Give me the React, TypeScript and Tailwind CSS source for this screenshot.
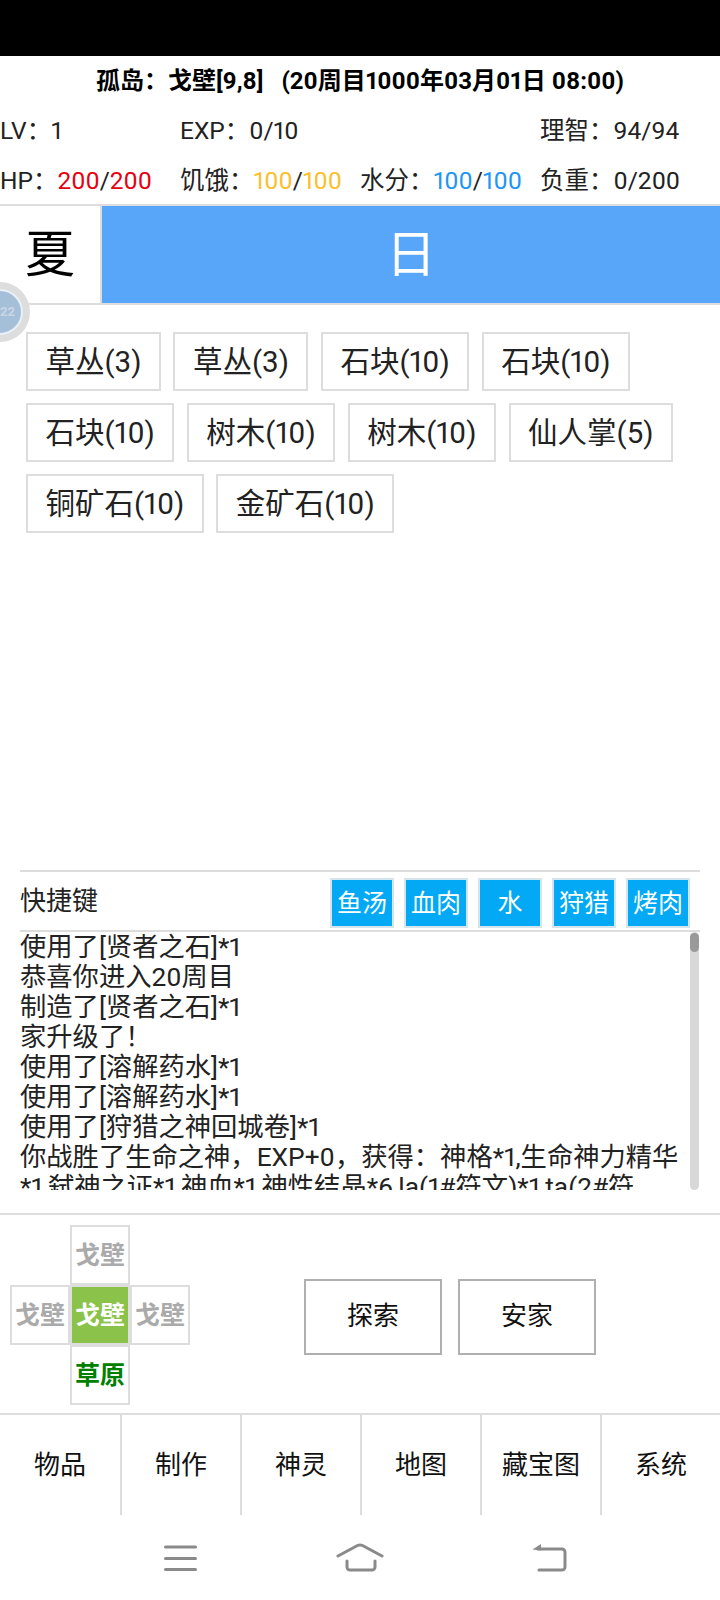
import React from "react";

const FONT = "[font-family:Roboto,'Noto_Sans_CJK_SC',sans-serif] proportional-nums";

const chipRows = [
  ["草丛(3)", "草丛(3)", "石块(10)", "石块(10)"],
  ["石块(10)", "树木(10)", "树木(10)", "仙人掌(5)"],
  ["铜矿石(10)", "金矿石(10)"],
];

const shortcuts = ["鱼汤", "血肉", "水", "狩猎", "烤肉"];
const tabs = ["物品", "制作", "神灵", "地图", "藏宝图", "系统"];

const logLines = [
  "使用了[贤者之石]*1",
  "恭喜你进入20周目",
  "制造了[贤者之石]*1",
  "家升级了！",
  "使用了[溶解药水]*1",
  "使用了[溶解药水]*1",
  "使用了[狩猎之神回城卷]*1",
  "你战胜了生命之神，EXP+0，获得：神格*1,生命神力精华",
  "*1,弑神之证*1,神血*1,神性结晶*6,la(1#符文)*1,ta(2#符",
];

const Stat = ({
  label,
  value,
  max,
  color,
}: {
  label: string;
  value: string;
  max: string;
  color: string;
}) => (
  <div className="whitespace-nowrap">
    {label}：<span className={color}>{value}</span>/
    <span className={color}>{max}</span>
  </div>
);

const MapCell = ({
  label,
  className,
}: {
  label: string;
  className: string;
}) => (
  <div
    className={`flex h-[60px] w-[60px] items-center justify-center border-2 border-[#dddddd] pt-[3px] text-[25px] font-bold ${className}`}
  >
    {label}
  </div>
);

export default function App() {
  return (
    <div className={`flex h-[1600px] w-[720px] flex-col overflow-hidden bg-white text-black ${FONT}`}>
      {/* Status bar */}
      <div className="h-[56px] shrink-0 bg-black" />

      {/* Title */}
      <div className="flex h-[50px] shrink-0 items-center justify-center whitespace-pre text-[24px] font-bold">
        孤岛：戈壁[9,8]{"   "}(20周目1000年03月01日 08:00)
      </div>

      {/* Stats */}
      <div className="grid h-[50px] shrink-0 grid-cols-4 items-center pt-px text-[24.5px] text-[#222222]">
        <div>LV：1</div>
        <div>EXP：0/10</div>
        <div />
        <div>理智：94/94</div>
      </div>
      <div className="grid h-[48px] shrink-0 grid-cols-4 items-center pt-[2px] text-[24.5px] text-[#222222]">
        <Stat label="HP" value="200" max="200" color="text-[#e60012]" />
        <Stat label="饥饿" value="100" max="100" color="text-[#fbc02d]" />
        <Stat label="水分" value="100" max="100" color="text-[#2196f3]" />
        <div>负重：0/200</div>
      </div>

      {/* Season and time of day */}
      <div className="flex h-[101px] shrink-0 border-y-2 border-[#dddddd] text-[50px]">
        <div className="flex w-[102px] items-center justify-center border-r-2 border-[#dddddd] pt-[2px]">
          夏
        </div>
        <div className="flex flex-1 items-center justify-center bg-[#58a6f9] pt-[2px] text-white">
          日
        </div>
      </div>

      {/* Floating ball */}
      <div className="absolute left-[-30px] top-[282px] flex h-[60px] w-[60px] items-center justify-center rounded-full bg-[#dddddd]">
        <div className="flex h-[46px] w-[46px] items-center justify-end rounded-full border-2 border-[#e8f0f8] bg-[#a6bfd9] pr-[6px] text-[13px] font-bold text-[#c8d6e6]">
          22
        </div>
      </div>

      {/* Resources */}
      <div className="flex flex-1 flex-col gap-[12px] pl-[26px] pt-[27px]">
        {chipRows.map((row, rowIndex) => (
          <div key={rowIndex} className="flex gap-[12.5px]">
            {row.map((chip, index) => (
              <div
                key={index}
                className="flex h-[59px] items-center border-2 border-[#dddddd] px-[17.5px] pt-px text-[29.5px] text-[#222222]"
              >
                {chip}
              </div>
            ))}
          </div>
        ))}
      </div>

      {/* Shortcuts */}
      <div className="mx-[20px] flex h-[62px] shrink-0 items-center justify-between border-y-2 border-[#dddddd] pr-[10px]">
        <div className="text-[26px] text-[#222222]">快捷键</div>
        <div className="mt-[4px] flex gap-[10px]">
          {shortcuts.map((name) => (
            <div
              key={name}
              className="flex h-[50px] w-[64px] items-center justify-center border-2 border-[#d5e5ee] bg-[#03a9f4] pt-[2px] text-[25px] text-white"
            >
              {name}
            </div>
          ))}
        </div>
      </div>

      {/* Log */}
      <div className="ml-[20px] mr-[21px] flex h-[258px] shrink-0">
        <div className="flex-1 overflow-hidden whitespace-nowrap text-[26.3px] leading-[30px] text-[#222222]">
          {logLines.map((line, index) => (
            <div key={index}>{line}</div>
          ))}
        </div>
        <div className="w-[9px] shrink-0 rounded-full bg-[#d8d8d8]">
          <div className="mt-px h-[19px] rounded-full bg-[#999999]" />
        </div>
      </div>

      {/* Map and actions */}
      <div className="mt-[23px] flex h-[202px] shrink-0 items-center border-y-2 border-[#dddddd] pl-[10px] pt-px">
        <div className="grid w-[180px] grid-cols-3">
          <div />
          <MapCell label="戈壁" className="text-[#aaaaaa]" />
          <div />
          <MapCell label="戈壁" className="text-[#aaaaaa]" />
          <MapCell label="戈壁" className="bg-[#8bc34a] text-white" />
          <MapCell label="戈壁" className="text-[#aaaaaa]" />
          <div />
          <MapCell label="草原" className="text-[#008000]" />
          <div />
        </div>
        <div className="ml-[114px] mt-[4px] flex gap-[16px]">
          {["探索", "安家"].map((name) => (
            <div
              key={name}
              className="flex h-[76px] w-[138px] items-center justify-center border-2 border-[#b0b0b0] text-[26px] text-[#111111]"
            >
              {name}
            </div>
          ))}
        </div>
      </div>

      {/* Tabs */}
      <div className="grid h-[100px] shrink-0 grid-cols-6">
        {tabs.map((tab, index) => (
          <div
            key={tab}
            className={`flex items-center justify-center text-[26px] text-[#111111] ${
              index > 0 ? "border-l-2 border-[#dddddd]" : ""
            }`}
          >
            {tab}
          </div>
        ))}
      </div>

      {/* System nav */}
      <div className="flex h-[85px] shrink-0 items-start pl-[164px] pt-[28px] text-[#8a8a8a]">
        <svg width="34" height="30" viewBox="0 0 34 30" fill="none" stroke="currentColor" strokeWidth="3" strokeLinecap="round">
          <path d="M1.500 4h30M1.500 15.500h30M1.500 26.500h30" />
        </svg>
        <svg className="ml-[138px]" width="48" height="30" viewBox="0 0 48 30" fill="none" stroke="currentColor" strokeWidth="3" strokeLinecap="round" strokeLinejoin="round">
          <path d="M2 13 21.500 2.500q2.500-1.200 5 0L46 13" />
          <path d="M11 18v6a3 3 0 0 0 3 3h22a3 3 0 0 0 3-3v-6" />
        </svg>
        <svg className="ml-[148px]" width="36" height="30" viewBox="0 0 36 30" fill="none" stroke="currentColor" strokeWidth="3" strokeLinecap="round">
          <path d="M6 6h24a3 3 0 0 1 3 3v15a3 3 0 0 1-3 3H7" />
          <path d="M0.500 6.500 9 1v6.500z" fill="currentColor" stroke="none" />
        </svg>
      </div>
    </div>
  );
}
